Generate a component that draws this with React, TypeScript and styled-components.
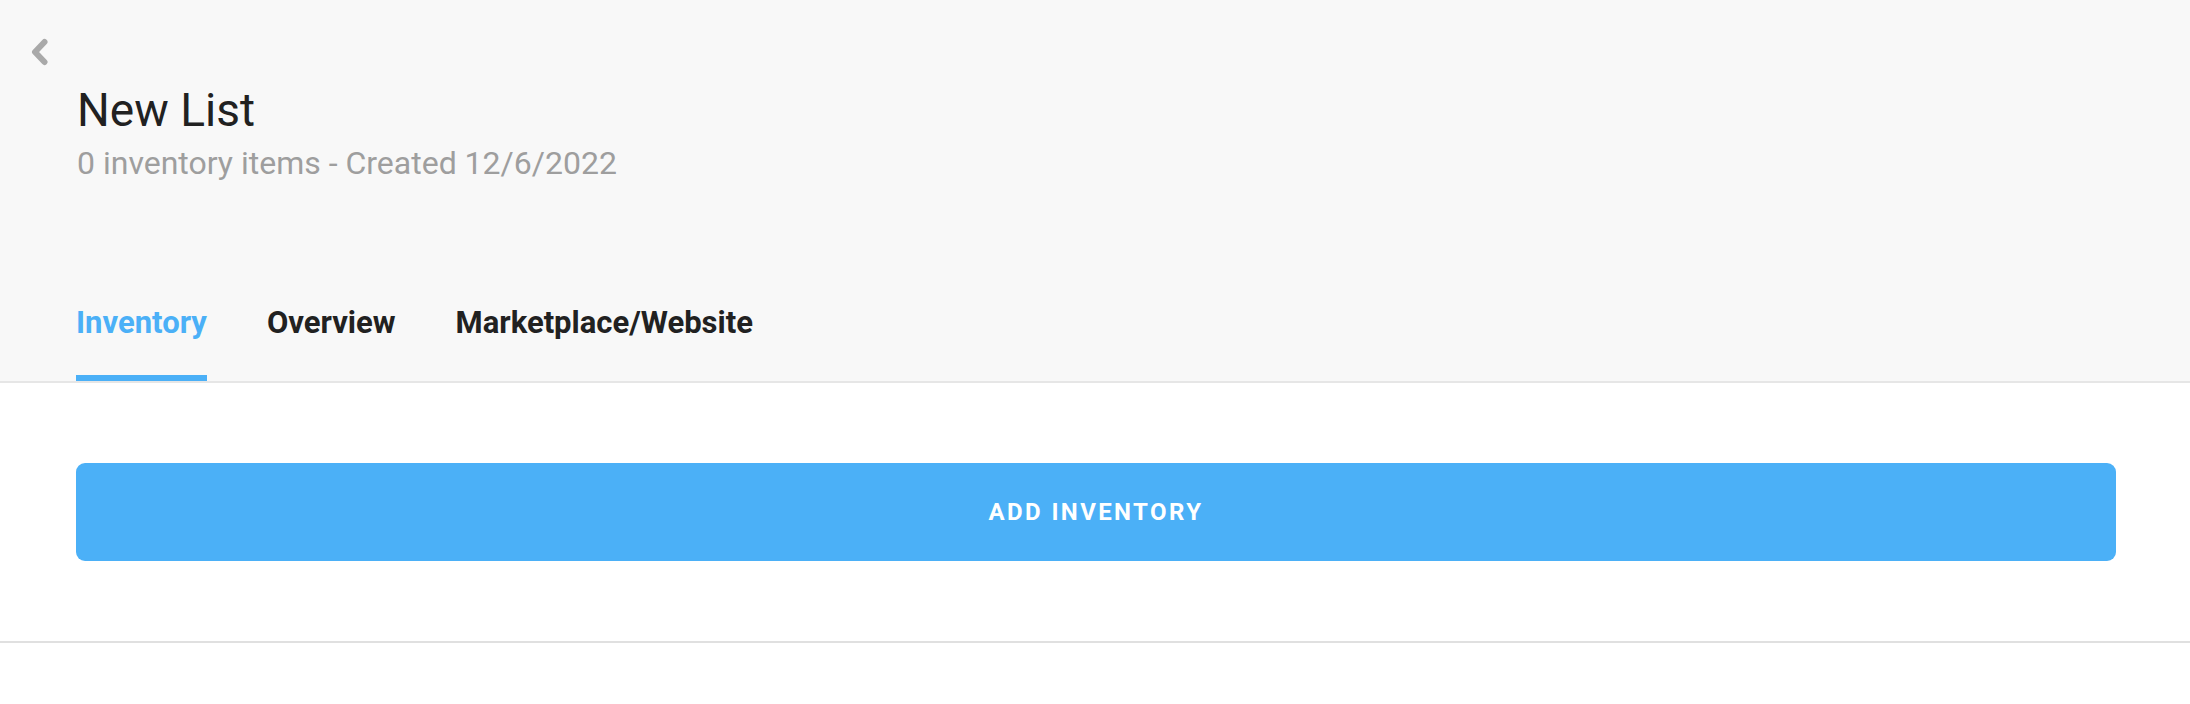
import styled, { createGlobalStyle } from 'styled-components'

const GlobalStyle = createGlobalStyle`
    html, body {
        margin: 0;
        padding: 0;
        background: #fff;
        font-family: Roboto, "Noto Sans", Arial, sans-serif;
    }
    * {
        box-sizing: border-box;
    }
`;

const Header = styled.header`
    background-color: #f8f8f8;
    border-bottom: 2px solid #e6e6e6;
    padding-top: 38px;
`;

const BackButton = styled.button`
    display: block;
    margin-left: 30px;
    padding: 0;
    width: 19px;
    height: 28px;
    border: none;
    background: none;
    cursor: pointer;
    color: #a9a9a9;
`;

const TitleBlock = styled.div`
    margin-top: 17px;
    padding-left: 77px;
`;

const Title = styled.h1`
    margin: 0;
    font-size: 46px;
    line-height: 54px;
    font-weight: 400;
    color: #212121;
`;

const Subtitle = styled.div`
    margin-top: 8px;
    font-size: 32px;
    line-height: 37px;
    color: #9e9e9e;
`;

const Tabs = styled.nav`
    display: flex;
    gap: 60px;
    margin-top: 123px;
    padding-left: 76px;
`;

const Tab = styled.div<{ $active?: boolean }>`
    font-size: 31px;
    line-height: 36px;
    font-weight: 700;
    padding-bottom: 34px;
    border-bottom: 6px solid ${p => (p.$active ? '#4bb0f7' : 'transparent')};
    color: ${p => (p.$active ? '#4bb0f7' : '#212121')};
    cursor: pointer;
`;

const Content = styled.section`
    padding: 80px 74px 80px 76px;
    border-bottom: 2px solid #e0e0e0;
`;

const AddButton = styled.button`
    display: flex;
    align-items: center;
    justify-content: center;
    width: 100%;
    height: 98px;
    border: none;
    border-radius: 9px;
    background-color: #4bb0f7;
    color: #fff;
    font-family: Roboto, "Noto Sans", Arial, sans-serif;
    font-size: 24px;
    font-weight: 700;
    letter-spacing: 2.4px;
    text-transform: uppercase;
    cursor: pointer;
`;

export default function App() {
    const tabs = ['Inventory', 'Overview', 'Marketplace/Website']

    return (
        <>
            <GlobalStyle />
            <Header>
                <BackButton aria-label="Back">
                    <svg width="19" height="28" viewBox="0 0 19 28">
                        <polyline
                            points="14.5,4 5,14 14.5,24"
                            fill="none"
                            stroke="currentColor"
                            strokeWidth="6"
                            strokeLinecap="round"
                            strokeLinejoin="round"
                        />
                    </svg>
                </BackButton>
                <TitleBlock>
                    <Title>New List</Title>
                    <Subtitle>0 inventory items - Created 12/6/2022</Subtitle>
                </TitleBlock>
                <Tabs>
                    {tabs.map((tab, i) => (
                        <Tab key={tab} $active={i === 0}>{tab}</Tab>
                    ))}
                </Tabs>
            </Header>
            <Content>
                <AddButton>Add Inventory</AddButton>
            </Content>
        </>
    )
}
